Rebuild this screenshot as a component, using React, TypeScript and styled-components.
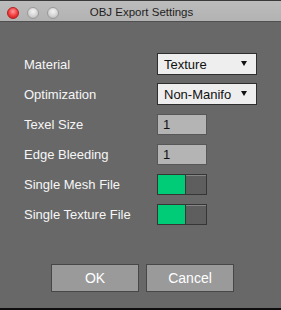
import React from "react";
import styled, { createGlobalStyle } from "styled-components";

const Global = createGlobalStyle`
  html, body {
    margin: 0;
    padding: 0;
    background: #0e0e0e;
  }
  body {
    font-family: "Liberation Sans", Arial, sans-serif;
  }
`;

type Row = {
  label: string;
  kind: "select" | "input" | "toggle";
  value?: string;
};

const rows: Row[] = [
  { label: "Material", kind: "select", value: "Texture" },
  { label: "Optimization", kind: "select", value: "Non-Manifo" },
  { label: "Texel Size", kind: "input", value: "1" },
  { label: "Edge Bleeding", kind: "input", value: "1" },
  { label: "Single Mesh File", kind: "toggle" },
  { label: "Single Texture File", kind: "toggle" },
];

const App: React.FC = () => {
  return (
    <>
      <Global />
      <Window>
        <TitleBar>
          <Lights>
            <Light color="red" />
            <Light />
            <Light />
          </Lights>
          <Title>OBJ Export Settings</Title>
        </TitleBar>
        <Body>
          <Form>
            {rows.map((r) => (
              <FormRow key={r.label}>
                <Label>{r.label}</Label>
                {r.kind === "select" && (
                  <Select>
                    <span>{r.value}</span>
                    <Arrow />
                  </Select>
                )}
                {r.kind === "input" && <Input>{r.value}</Input>}
                {r.kind === "toggle" && (
                  <Toggle>
                    <On />
                    <Knob />
                  </Toggle>
                )}
              </FormRow>
            ))}
          </Form>
          <Buttons>
            <Button>OK</Button>
            <Button>Cancel</Button>
          </Buttons>
        </Body>
      </Window>
    </>
  );
};
export default App;

const Window = styled.div`
  width: 281px;
  height: 308px;
  display: flex;
  flex-direction: column;
  background: #686868;
`;

const TitleBar = styled.div`
  position: relative;
  height: 22px;
  box-sizing: border-box;
  background: linear-gradient(#bcbcbc, #b2b2b2);
  border-top: 1px solid #3a3a3a;
  border-bottom: 1px solid #505050;
  display: flex;
  align-items: center;
  justify-content: center;
`;

const Lights = styled.div`
  position: absolute;
  left: 7px;
  top: 6px;
  display: flex;
  gap: 8px;
`;

const Light = styled.div<{ color?: string }>`
  width: 12px;
  height: 12px;
  border-radius: 50%;
  box-sizing: border-box;
  background: ${(p) =>
    p.color === "red"
      ? "radial-gradient(circle at 50% 35%, #ff9a9a, #f03a3a 55%, #c81818)"
      : "radial-gradient(circle at 50% 35%, #f4f4f4, #d0d0d0 60%, #a8a8a8)"};
  border: 1px solid ${(p) => (p.color === "red" ? "#b02020" : "#9a9a9a")};
`;

const Title = styled.div`
  font-size: 11.5px;
  color: #1e1e1e;
  margin-left: 2px;
  margin-top: 2px;
`;

const Body = styled.div`
  flex: 1;
  display: flex;
  flex-direction: column;
  padding: 31px 24px 0 24px;
`;

const Form = styled.div`
  display: flex;
  flex-direction: column;
  gap: 8px;
`;

const FormRow = styled.div`
  display: grid;
  grid-template-columns: 133px auto;
  align-items: center;
  height: 22px;
`;

const Label = styled.div`
  font-size: 13px;
  color: #f6f6f6;
`;

const Select = styled.div`
  width: 100px;
  height: 22px;
  box-sizing: border-box;
  background: #eeeeee;
  border: 1px solid #2e2e2e;
  display: flex;
  align-items: center;
  justify-content: space-between;
  padding: 0 9px 0 6px;
  font-size: 13px;
  color: #111;
`;

const Arrow = styled.div`
  width: 0;
  height: 0;
  border-left: 3.5px solid transparent;
  border-right: 3.5px solid transparent;
  border-top: 5px solid #111;
  margin-top: -2px;
`;

const Input = styled.div`
  width: 50px;
  height: 21px;
  box-sizing: border-box;
  background: #b4b4b4;
  border: 1px solid #575757;
  font-size: 13px;
  color: #111;
  padding-left: 5px;
  display: flex;
  align-items: center;
`;

const Toggle = styled.div`
  width: 50px;
  height: 21px;
  box-sizing: border-box;
  border: 1.5px solid #363636;
  display: flex;
`;

const On = styled.div`
  width: 27px;
  background: #00cc77;
  border-right: 1px solid #363636;
`;

const Knob = styled.div`
  flex: 1;
  background: #5e5e5e;
  border-top: 1px solid #858585;
`;

const Buttons = styled.div`
  display: flex;
  justify-content: center;
  gap: 7px;
  margin-top: 39px;
  margin-left: 4px;
`;

const Button = styled.div`
  width: 88px;
  height: 28px;
  box-sizing: border-box;
  background: #9a9a9a;
  border: 1px solid #474747;
  color: #fff;
  font-size: 14px;
  display: flex;
  align-items: center;
  justify-content: center;
`;
